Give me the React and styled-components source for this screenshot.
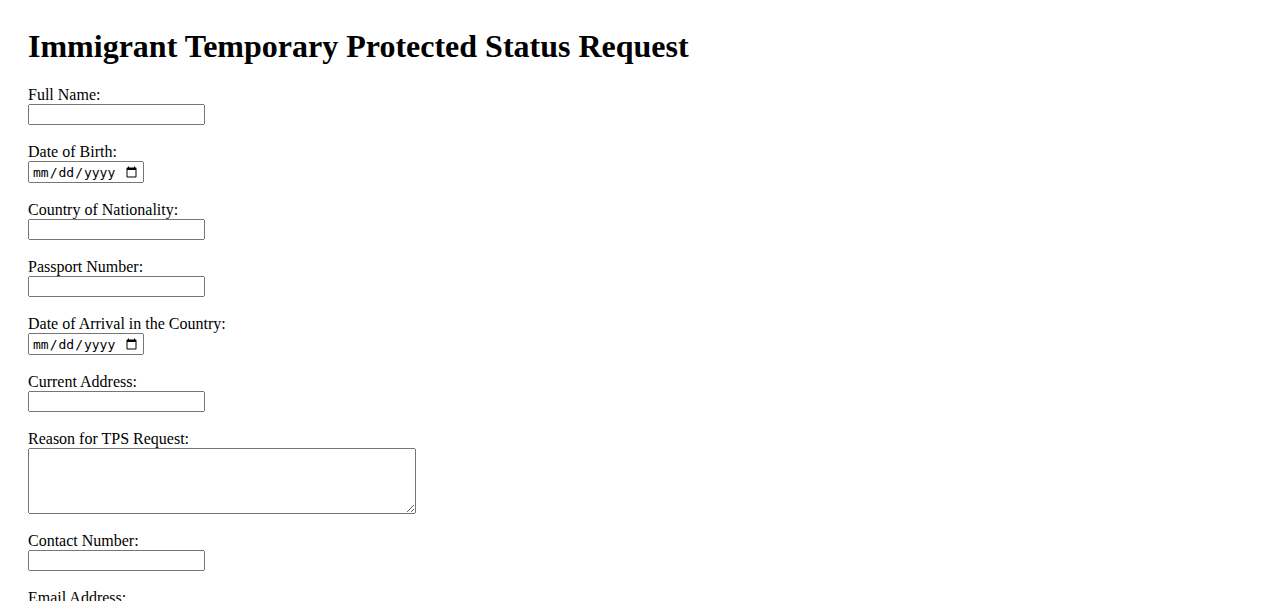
import React from 'react';
import styled, { createGlobalStyle } from 'styled-components';

const GlobalStyle = createGlobalStyle`
  body {
    margin: 8px;
    background: #ffffff;
    color: #000000;
    font-family: "Liberation Serif", "Times New Roman", serif;
  }
`;

const Page = styled.div`
  padding: 20px;
`;

const Title = styled.h1`
  margin: 0 0 21px;
  font-size: 32px;
  font-weight: bold;
`;

const Label = styled.label`
  font-size: 16px;
`;

const TextInput = styled.input`
  box-sizing: border-box;
  width: 177px;
  height: 21px;
`;

const DateInput = styled.input`
  box-sizing: border-box;
  width: 116px;
  height: 22px;
  padding: 1px 2px;
  font-size: 13px;
`;

const TextArea = styled.textarea`
  box-sizing: border-box;
  width: 388px;
  height: 66px;
  vertical-align: top;
`;

const SubmitButton = styled.button``;

const fields = [
  { id: 'fullName', label: 'Full Name:', type: 'text' },
  { id: 'dob', label: 'Date of Birth:', type: 'date' },
  { id: 'nationality', label: 'Country of Nationality:', type: 'text' },
  { id: 'passport', label: 'Passport Number:', type: 'text' },
  { id: 'arrival', label: 'Date of Arrival in the Country:', type: 'date' },
  { id: 'address', label: 'Current Address:', type: 'text' },
  { id: 'reason', label: 'Reason for TPS Request:', type: 'textarea' },
  { id: 'phone', label: 'Contact Number:', type: 'tel' },
  { id: 'email', label: 'Email Address:', type: 'email' },
];

function Field({ id, label, type }) {
  let control;
  if (type === 'textarea') control = <TextArea id={id} rows="4" cols="50" />;
  else if (type === 'date') control = <DateInput id={id} type="date" />;
  else control = <TextInput id={id} type={type} />;

  return (
    <>
      <Label htmlFor={id}>{label}</Label>
      <br />
      {control}
      <br />
      <br />
    </>
  );
}

export default function App() {
  return (
    <Page>
      <GlobalStyle />
      <Title>Immigrant Temporary Protected Status Request</Title>
      <form onSubmit={(e) => e.preventDefault()}>
        {fields.map((f) => (
          <Field key={f.id} {...f} />
        ))}
        <SubmitButton type="submit">Submit Request</SubmitButton>
      </form>
    </Page>
  );
}
